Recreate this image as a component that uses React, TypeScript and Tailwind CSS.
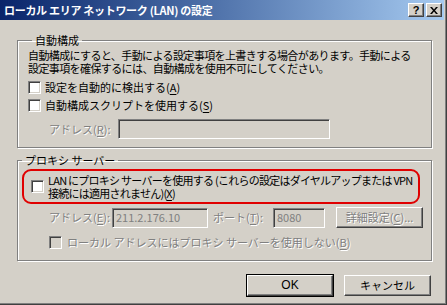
import React from "react";

const Check = ({ disabled }: { disabled?: boolean }) => (
  <div
    className={`w-[13px] h-[13px] shrink-0 border border-t-[#808080] border-l-[#808080] border-r-white border-b-white shadow-[inset_1px_1px_0_#404040,inset_-1px_-1px_0_#d4d0c8] ${
      disabled ? "bg-[#d4d0c8]" : "bg-white"
    }`}
  />
);

const U = ({ children }: { children: React.ReactNode }) => <span className="underline underline-offset-2">{children}</span>;

const Dis = ({ children, className = "" }: { children: React.ReactNode; className?: string }) => (
  <span className={`text-[#808080] [text-shadow:1px_1px_0_#ffffff] whitespace-nowrap ${className}`}>{children}</span>
);

const Field = ({ w, children }: { w: string; children?: React.ReactNode }) => (
  <div
    className={`${w} h-[20px] shrink-0 flex items-center pl-[3px] text-[#808080] border border-t-[#808080] border-l-[#808080] border-r-white border-b-white shadow-[inset_1px_1px_0_#404040,inset_-1px_-1px_0_#d4d0c8] bg-[#d4d0c8]`}
  >
    {children}
  </div>
);

const Btn = ({ w, children }: { w: string; children: React.ReactNode }) => (
  <div
    className={`${w} h-[21px] flex items-center justify-center border border-t-white border-l-white border-r-[#404040] border-b-[#404040] shadow-[inset_-1px_-1px_0_#808080] bg-[#d4d0c8]`}
  >
    {children}
  </div>
);

export default function App() {
  return (
    <div className="w-[447px] h-[305px] bg-[#d4d0c8] font-['Noto_Sans_CJK_JP',sans-serif] text-[11px] leading-[13px] text-black flex flex-col pr-[3px] pb-[3px] shadow-[inset_-1px_-1px_0_#404040,inset_-2px_-2px_0_#808080] overflow-hidden">
      {/* Title bar */}
      <div className="h-[20px] shrink-0 flex items-center justify-between bg-gradient-to-r from-[#0a246a] to-[#a6caf0] pl-[4px] pr-[2px]">
        <span className="text-white font-bold text-[11px] tracking-[-0.3px] whitespace-nowrap">ローカル エリア ネットワーク (LAN) の設定</span>
        <div className="flex gap-[2px]">
          <div className="w-[16px] h-[14px] flex items-center justify-center border border-t-white border-l-white border-r-[#404040] border-b-[#404040] shadow-[inset_-1px_-1px_0_#808080] bg-[#d4d0c8]">
            <span className="font-bold text-[11px] leading-none font-['Liberation_Sans',sans-serif]">?</span>
          </div>
          <div className="w-[16px] h-[14px] flex items-center justify-center border border-t-white border-l-white border-r-[#404040] border-b-[#404040] shadow-[inset_-1px_-1px_0_#808080] bg-[#d4d0c8]">
            <svg width="8" height="7" viewBox="0 0 8 7">
              <path d="M0 0h2l2 2.5L6 0h2L5 3.5 8 7H6L4 4.5 2 7H0l3-3.5z" fill="#000" />
            </svg>
          </div>
        </div>
      </div>

      {/* Group 1 */}
      <fieldset className="ml-[17px] mt-[12px] w-[415px] h-[116px] border border-[#808080] shadow-[inset_1px_1px_0_#ffffff,1px_1px_0_#ffffff] pl-[10px]">
        <legend className="ml-[4px] px-[3px] leading-[16px]">自動構成</legend>
        <div className="mt-[1px] tracking-[-0.6px] whitespace-nowrap">
          自動構成にすると、手動による設定事項を上書きする場合があります。手動による
          <br />
          設定事項を確保するには、自動構成を使用不可にしてください。
        </div>
        <div className="flex items-center gap-[4px] mt-[6px]">
          <Check />
          <span className="whitespace-nowrap">
            設定を自動的に検出する(<U>A</U>)
          </span>
        </div>
        <div className="flex items-center gap-[4px] mt-[5px]">
          <Check />
          <span className="whitespace-nowrap">
            自動構成スクリプトを使用する(<U>S</U>)
          </span>
        </div>
        <div className="flex items-center mt-[7px]">
          <Dis className="ml-[21px] w-[69px]">
            アドレス(<U>R</U>):
          </Dis>
          <Field w="w-[212px]" />
        </div>
      </fieldset>

      {/* Group 2 */}
      <fieldset className="ml-[17px] mt-[4px] w-[415px] h-[109px] border border-[#808080] shadow-[inset_1px_1px_0_#ffffff,1px_1px_0_#ffffff]">
        <legend className="ml-[4px] px-[3px] leading-[16px]">プロキシ サーバー</legend>
        <div className="ml-[4px] mt-[1px] w-[398px] h-[35px] border-2 border-[#e00000] rounded-[9px] flex items-center pl-[7px] gap-[4px]">
          <Check />
          <span className="tracking-[-0.75px] whitespace-nowrap">
            LAN にプロキシ サーバーを使用する (これらの設定はダイヤルアップまたは VPN
            <br />
            接続には適用されません)(<U>X</U>)
          </span>
        </div>
        <div className="flex items-center mt-[3px]">
          <Dis className="ml-[31px] w-[63px]">
            アドレス(<U>E</U>):
          </Dis>
          <Field w="w-[96px]">211.2.176.10</Field>
          <Dis className="ml-[5px] w-[60px]">
            ポート(<U>T</U>):
          </Dis>
          <Field w="w-[52px]">8080</Field>
          <div className="ml-[11px]">
            <Btn w="w-[87px]">
              <Dis>
                詳細設定(<U>C</U>)...
              </Dis>
            </Btn>
          </div>
        </div>
        <div className="flex items-center gap-[5px] mt-[8px] ml-[31px]">
          <Check disabled />
          <Dis>
            ローカル アドレスにはプロキシ サーバーを使用しない(<U>B</U>)
          </Dis>
        </div>
      </fieldset>

      {/* Buttons */}
      <div className="flex justify-end gap-[10px] mr-[13px] mt-[13px]">
        <div className="border border-black">
          <Btn w="w-[86px]">
            <span className="font-['Liberation_Sans',sans-serif] text-[12px]">OK</span>
          </Btn>
        </div>
        <div className="mt-[1px]">
          <Btn w="w-[87px]">キャンセル</Btn>
        </div>
      </div>
    </div>
  );
}
